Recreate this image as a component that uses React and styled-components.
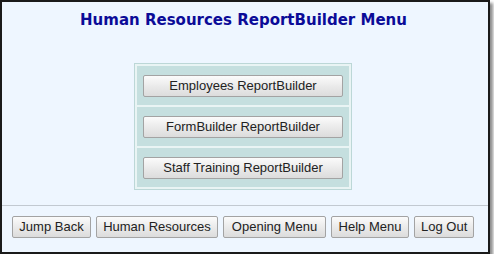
import React from "react";
import styled, { createGlobalStyle } from "styled-components";

const Global = createGlobalStyle`
  html, body { margin: 0; padding: 0; background: #ffffff; }
  body { font-family: "Liberation Sans", Arial, sans-serif; }
`;

const Frame = styled.div`
  box-sizing: border-box;
  width: 490px;
  height: 254px;
  border: 2px solid #1a1a1a;
  background: #eef6ff;
  box-shadow: 3px 3px 3px rgba(0, 0, 0, 0.45);
  display: flex;
  flex-direction: column;
  align-items: center;
`;

const Title = styled.h1`
  margin: 8px 3px 0 0;
  font-family: "DejaVu Sans", Verdana, sans-serif;
  font-weight: bold;
  font-size: 15px;
  line-height: 20px;
  color: #0b0b98;
  text-align: center;
`;

const MenuTable = styled.div`
  box-sizing: border-box;
  margin: 33px 4px 0 0;
  width: 218px;
  border: 1px solid #bcd7d7;
  background: #e9f4f4;
  padding: 2px;
  display: grid;
  grid-auto-rows: 39px;
  gap: 2px;
`;

const MenuCell = styled.div`
  box-sizing: border-box;
  background: #c5dfdf;
  display: flex;
  align-items: center;
  justify-content: center;
`;

const Button = styled.button`
  box-sizing: border-box;
  height: 22px;
  width: ${(p) => (p.$width ? `${p.$width}px` : "auto")};
  padding: 0 6px;
  border: 1px solid #a3a3a3;
  border-radius: 2px;
  background: linear-gradient(#fbfbfb, #e9e9e9 55%, #dcdcdc);
  font-family: "Liberation Sans", Arial, sans-serif;
  font-size: 13px;
  color: #222222;
  line-height: 20px;
  cursor: pointer;
  white-space: nowrap;
`;

const Spacer = styled.div`
  flex: 1;
`;

const Footer = styled.div`
  box-sizing: border-box;
  width: 100%;
  border-top: 1px solid #c2c9d1;
  padding: 10px 0 14px 10px;
  display: flex;
  gap: 5px;
`;

const menuItems = [
  "Employees ReportBuilder",
  "FormBuilder ReportBuilder",
  "Staff Training ReportBuilder",
];

const footerItems = [
  { label: "Jump Back", w: 79 },
  { label: "Human Resources", w: 122 },
  { label: "Opening Menu", w: 103 },
  { label: "Help Menu", w: 78 },
  { label: "Log Out", w: 60 },
];

export default function App() {
  return (
    <>
      <Global />
      <Frame>
        <Title>Human Resources ReportBuilder Menu</Title>
        <MenuTable>
          {menuItems.map((m) => (
            <MenuCell key={m}>
              <Button $width={200}>{m}</Button>
            </MenuCell>
          ))}
        </MenuTable>
        <Spacer />
        <Footer>
          {footerItems.map((f) => (
            <Button key={f.label} $width={f.w}>
              {f.label}
            </Button>
          ))}
        </Footer>
      </Frame>
    </>
  );
}
